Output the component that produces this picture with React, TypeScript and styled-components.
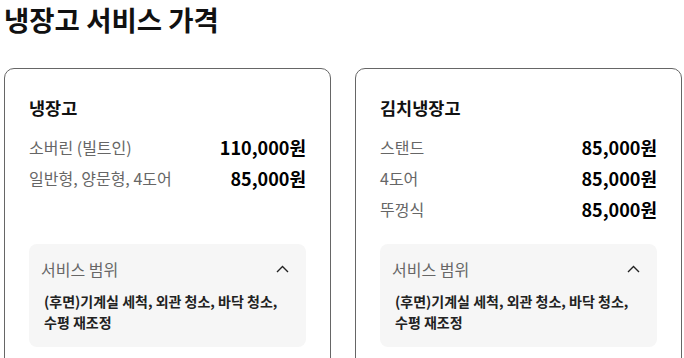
import React from 'react';
import styled, { createGlobalStyle } from 'styled-components';

const GlobalStyle = createGlobalStyle`
  html, body {
    margin: 0;
    padding: 0;
    background: #fff;
  }
  body {
    font-family: "Noto Sans CJK KR", "Noto Sans", sans-serif;
    color: #111;
  }
`;

const Page = styled.div`
  padding: 0 4px;
  width: 684px;
  box-sizing: border-box;
  overflow: hidden;
`;

const PageTitle = styled.h1`
  margin: 0;
  font-size: 27.5px;
  line-height: 38px;
  font-weight: 700;
  color: #111;
`;

const CardGrid = styled.div`
  display: grid;
  grid-template-columns: 327px 327px;
  gap: 24px;
  margin-top: 30px;
`;

const Card = styled.section`
  display: flex;
  flex-direction: column;
  border: 1px solid #666;
  border-radius: 10px;
  padding: 27px 24px 24px;
`;

const CardTitle = styled.h2`
  margin: 0 0 11px;
  font-size: 17.5px;
  line-height: 24px;
  font-weight: 700;
  color: #111;
`;

const PriceList = styled.ul`
  list-style: none;
  margin: 0 0 20px;
  padding: 0;
`;

const PriceRow = styled.li`
  display: flex;
  align-items: center;
  justify-content: space-between;
  height: 31px;
`;

const Label = styled.span`
  font-size: 16px;
  color: #666;
`;

const Price = styled.span`
  font-size: 18px;
  font-weight: 700;
  color: #000;
`;

const ScopeBox = styled.div`
  margin-top: auto;
  background: #f6f6f6;
  border-radius: 8px;
  padding: 14px 17px 14px 12px;
`;

const ScopeHeader = styled.div`
  display: flex;
  align-items: center;
  justify-content: space-between;
  height: 22px;
  margin-bottom: 11px;
`;

const ScopeTitle = styled.span`
  font-size: 16px;
  color: #666;
`;

const ScopeText = styled.p`
  margin: 0;
  padding-left: 3px;
  font-size: 14px;
  line-height: 21px;
  font-weight: 700;
  color: #222;
`;

const ChevronUp = () => (
  <svg width="13" height="8" viewBox="0 0 13 8" fill="none">
    <polyline points="1,7 6.5,1.5 12,7" stroke="#222" strokeWidth="1.4" />
  </svg>
);

const cards = [
  {
    title: '냉장고',
    rows: [
      { label: '소버린 (빌트인)', price: '110,000원' },
      { label: '일반형, 양문형, 4도어', price: '85,000원' },
    ],
  },
  {
    title: '김치냉장고',
    rows: [
      { label: '스탠드', price: '85,000원' },
      { label: '4도어', price: '85,000원' },
      { label: '뚜껑식', price: '85,000원' },
    ],
  },
];

const App = () => {
  return (
    <>
      <GlobalStyle />
      <Page>
        <PageTitle>냉장고 서비스 가격</PageTitle>
        <CardGrid>
          {cards.map((card) => (
            <Card key={card.title}>
              <CardTitle>{card.title}</CardTitle>
              <PriceList>
                {card.rows.map((row) => (
                  <PriceRow key={row.label}>
                    <Label>{row.label}</Label>
                    <Price>{row.price}</Price>
                  </PriceRow>
                ))}
              </PriceList>
              <ScopeBox>
                <ScopeHeader>
                  <ScopeTitle>서비스 범위</ScopeTitle>
                  <ChevronUp />
                </ScopeHeader>
                <ScopeText>
                  (후면)기계실 세척, 외관 청소, 바닥 청소,
                  <br />
                  수평 재조정
                </ScopeText>
              </ScopeBox>
            </Card>
          ))}
        </CardGrid>
      </Page>
    </>
  );
};

export default App;
